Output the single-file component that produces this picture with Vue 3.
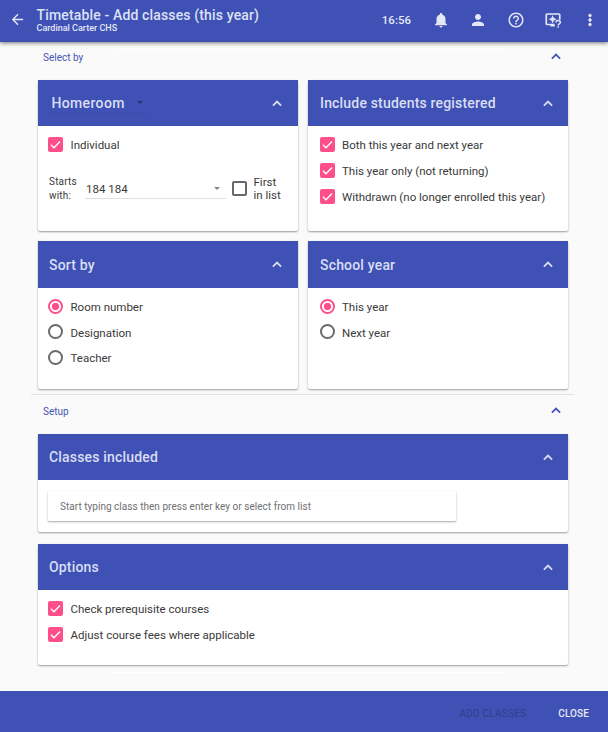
<script setup>
import { ref, h } from 'vue'

const Chevron = () =>
  h('svg', { class: 'chevron', viewBox: '0 0 10 7' }, [
    h('path', { d: 'M0.9 5.6 L5 1.6 L9.1 5.6', fill: 'none', stroke: 'currentColor', 'stroke-width': '1.8' })
  ])

const registered = ref([
  { label: 'Both this year and next year', on: true },
  { label: 'This year only (not returning)', on: true },
  { label: 'Withdrawn (no longer enrolled this year)', on: true }
])
const options = ref([
  { label: 'Check prerequisite courses', on: true },
  { label: 'Adjust course fees where applicable', on: true }
])
const individual = ref(true)
const sortOptions = ['Room number', 'Designation', 'Teacher']
const sortBy = ref('Room number')
const yearOptions = ['This year', 'Next year']
const year = ref('This year')
</script>

<template>
  <div class="page">
    <header class="topbar">
      <svg class="back" viewBox="0 0 24 24"><path d="M20 11H7.83l5.59-5.59L12 4l-8 8 8 8 1.41-1.41L7.83 13H20v-2z" /></svg>
      <div class="titles">
        <div class="title">Timetable - Add classes (this year)</div>
        <div class="subtitle">Cardinal Carter CHS</div>
      </div>
      <div class="tools">
        <span class="clock">16:56</span>
        <svg viewBox="0 0 24 24"><path d="M12 22c1.1 0 2-.9 2-2h-4c0 1.1.9 2 2 2zm6-6v-5c0-3.07-1.64-5.64-4.5-6.32V4c0-.83-.67-1.5-1.5-1.5s-1.5.67-1.5 1.5v.68C7.63 5.36 6 7.92 6 11v5l-2 2v1h16v-1l-2-2z" /></svg>
        <svg viewBox="0 0 24 24"><path d="M12 12c2.21 0 4-1.79 4-4s-1.79-4-4-4-4 1.79-4 4 1.79 4 4 4zm0 2c-2.67 0-8 1.34-8 4v2h16v-2c0-2.66-5.33-4-8-4z" /></svg>
        <svg viewBox="0 0 24 24"><path d="M11 18h2v-2h-2v2zm1-16C6.48 2 2 6.48 2 12s4.48 10 10 10 10-4.48 10-10S17.52 2 12 2zm0 18c-4.41 0-8-3.59-8-8s3.59-8 8-8 8 3.59 8 8-3.59 8-8 8zm0-14c-2.21 0-4 1.79-4 4h2c0-1.1.9-2 2-2s2 .9 2 2c0 2-3 1.75-3 5h2c0-2.25 3-2.5 3-5 0-2.21-1.79-4-4-4z" /></svg>
        <svg viewBox="0 0 24 24">
          <path d="M21 11.500V5.200A1.200 1.200 0 0 0 19.800 4H4.200A1.200 1.200 0 0 0 3 5.200V16.800A1.200 1.200 0 0 0 4.200 18H14M8.500 19.700H14.500" fill="none" stroke="currentColor" stroke-width="2.200" />
          <path d="M11.500 5.500l1.700 3.800 3.800 1.700-3.800 1.700-1.700 3.800-1.700-3.800L6 11l3.800-1.700z" />
          <path d="M16 15.200c0-3.200 5.800-3.200 5.800 0 0 2-2.900 2-2.900 4M18.900 20.400v2" fill="none" stroke="currentColor" stroke-width="2" />
        </svg>
        <svg viewBox="0 0 24 24"><path d="M12 8c1.100 0 2-.9 2-2s-.9-2-2-2-2 .9-2 2 .9 2 2 2zm0 2c-1.100 0-2 .9-2 2s.9 2 2 2 2-.9 2-2-.9-2-2-2zm0 6c-1.100 0-2 .9-2 2s.9 2 2 2 2-.9 2-2-.9-2-2-2z" stroke="currentColor" stroke-width=".6" /></svg>
      </div>
    </header>

    <main class="content">
      <div class="hairline top"></div>
      <div class="section-label first"><span>Select by</span><Chevron /></div>

      <div class="grid">
        <section class="card r1">
          <div class="head">
            <h2 class="picker">Homeroom<i class="caret dark"></i></h2><Chevron />
          </div>
          <div class="body">
            <label class="row" @click="individual = !individual">
              <span class="check" :class="{ on: individual }"><svg viewBox="0 0 15 15"><path d="M3 7.700l3 3 6-6.200" /></svg></span>
              Individual
            </label>
            <div class="starts">
              <span class="starts-label">Starts with:</span>
              <span class="select">184 184<i class="caret"></i></span>
              <span class="check"></span>
              <span class="first-in">First<br />in list</span>
            </div>
          </div>
        </section>

        <section class="card r1">
          <div class="head"><h2>Include students registered</h2><Chevron /></div>
          <div class="body">
            <label v-for="r in registered" :key="r.label" class="row" @click="r.on = !r.on">
              <span class="check" :class="{ on: r.on }"><svg viewBox="0 0 15 15"><path d="M3 7.700l3 3 6-6.200" /></svg></span>
              {{ r.label }}
            </label>
          </div>
        </section>

        <section class="card r2">
          <div class="head"><h2>Sort by</h2><Chevron /></div>
          <div class="body">
            <label v-for="s in sortOptions" :key="s" class="row" @click="sortBy = s">
              <span class="radio" :class="{ on: sortBy === s }"></span>{{ s }}
            </label>
          </div>
        </section>

        <section class="card r2">
          <div class="head"><h2>School year</h2><Chevron /></div>
          <div class="body">
            <label v-for="y in yearOptions" :key="y" class="row" @click="year = y">
              <span class="radio" :class="{ on: year === y }"></span>{{ y }}
            </label>
          </div>
        </section>
      </div>

      <div class="divider"></div>
      <div class="section-label second"><span>Setup</span><Chevron /></div>

      <section class="card classes">
        <div class="head"><h2>Classes included</h2><Chevron /></div>
        <div class="body"><div class="search">Start typing class then press enter key or select from list</div></div>
      </section>

      <section class="card options">
        <div class="head"><h2>Options</h2><Chevron /></div>
        <div class="body">
          <label v-for="o in options" :key="o.label" class="row" @click="o.on = !o.on">
            <span class="check" :class="{ on: o.on }"><svg viewBox="0 0 15 15"><path d="M3 7.700l3 3 6-6.200" /></svg></span>
            {{ o.label }}
          </label>
        </div>
      </section>
      <div class="hairline bottom"></div>
    </main>

    <footer class="footer">
      <button class="add" disabled>ADD CLASSES</button>
      <button class="close">CLOSE</button>
    </footer>
  </div>
</template>

<style>
body { margin: 0; background: #fafafa; }
</style>

<style scoped>
* { box-sizing: border-box; }
.page {
  height: 732px;
  display: flex;
  flex-direction: column;
  background: #fafafa;
  font-family: Roboto, "Liberation Sans", sans-serif;
  color: #3a3a3a;
  overflow: hidden;
}
.topbar {
  height: 42px;
  flex: none;
  display: flex;
  align-items: flex-start;
  background: #3f51b5;
  color: #e4e7f6;
  box-shadow: 0 1px 4px rgba(0, 0, 0, .55);
  z-index: 1;
}
.back { width: 17px; height: 17px; margin: 11px 10.500px 0 9px; fill: currentColor; }
.titles { padding-top: 7px; white-space: nowrap; }
.title { font-size: 14px; line-height: 16px; font-weight: 500; letter-spacing: .15px; color: #dde1f4; }
.subtitle { font-size: 9px; line-height: 11px; font-weight: 500; }
.tools { margin-left: auto; display: flex; align-items: center; height: 39px; padding-right: 9px; }
.tools svg { width: 18px; height: 18px; fill: currentColor; margin-left: 19.500px; }
.tools svg:last-child { margin-left: 19px; }
.clock { font-size: 11.500px; font-weight: 500; margin-right: 1px; }
.content { flex: 1; padding: 0 40px 0 38px; }
.hairline { width: 393px; height: 1px; margin-left: 75px; background: #fff; }
.hairline.top { margin-top: 7px; }
.hairline.bottom { margin-top: 7px; }
.section-label {
  display: flex;
  justify-content: space-between;
  padding: 0 7.500px 0 5px;
  height: 16px;
  line-height: 16px;
  font-size: 10px;
  color: #4655b3;
}
.section-label.second { margin-top: 9px; margin-bottom: 14px; }
.section-label.first { margin-bottom: 14px; }
.section-label .chevron { margin-top: 2.500px; }
.chevron { width: 10px; height: 7px; flex: none; }
.grid { display: grid; grid-template-columns: 260px 260px; gap: 10px; }
.card {
  background: #fff;
  border-radius: 2px;
  box-shadow: 0 1px 2px rgba(0, 0, 0, .38);
}
.r1 { height: 151px; }
.r2 { height: 148px; }
.head {
  height: 46px;
  display: flex;
  justify-content: space-between;
  align-items: center;
  padding: 0 15px 0 12px;
  background: #3f51b5;
  color: #d9def3;
}
.r2 .head { height: 47px; }
.grid .card:nth-child(odd) .head { padding-left: 11px; padding-right: 16px; }
.classes .head, .options .head { padding-left: 11px; }
h2 { margin: 0; font-size: 14px; font-weight: 500; letter-spacing: .18px; line-height: 20px; }
.picker { width: 100px; padding-left: 2.500px; letter-spacing: .35px; display: flex; align-items: center; border-bottom: 1px solid #3b4cab; }
.caret { border: 3px solid transparent; border-top-color: #888; border-bottom: 0; }
.caret.dark { border-top-color: #27326f; margin-left: 12.500px; }
.body { padding: 6px 10px 0; }
.grid .card:nth-child(even) .body { padding-left: 12px; }
.row { display: flex; align-items: center; height: 26px; font-size: 11.500px; gap: 7px; white-space: nowrap; }
.grid .card:nth-child(odd) .row, .options .row { gap: 7.500px; }
.r2 .row { height: 25.700px; }
.check { width: 15px; height: 15px; flex: none; border: 2px solid #686868; border-radius: 2px; }
.check.on { border: 0; background: #ff4f8b; margin-bottom: 1px; }
.check svg { display: none; width: 15px; height: 15px; fill: none; stroke: #fff; stroke-width: 1.300; }
.check.on svg { display: block; }
.radio { width: 15px; height: 15px; flex: none; border: 2px solid #6b6b6b; border-radius: 50%; margin-bottom: 1.500px; }
.radio.on { border-color: #ff4f8b; background: radial-gradient(circle, #ff4f8b 3.300px, #fff 4px); }
.starts { display: flex; align-items: center; margin-top: 17px; height: 28px; padding-left: 1px; }
.starts .check { margin-bottom: 2px; }
.starts-label { width: 36px; font-size: 10px; line-height: 14px; letter-spacing: .2px; }
.select { width: 141px; height: 20px; line-height: 18px; padding: 0 6px 0 1px; display: flex; align-items: center; justify-content: space-between; font-size: 11.500px; border-bottom: 1px solid #e0e0e0; margin-right: 5.500px; }
.first-in { font-size: 11.500px; line-height: 13px; margin-left: 7px; }
.divider { height: 1px; background: #e2e2e2; margin: 5px -6px 0 -7px; }
.classes { height: 98px; width: 530px; }
.options { height: 121px; width: 530px; margin-top: 12px; }
.classes .body { padding: 11px 10px 0; }
.search { width: 408px; height: 30px; line-height: 31px; padding-left: 12px; font-size: 10px; letter-spacing: .03px; color: #707070; box-shadow: 0 1px 2px rgba(0, 0, 0, .35); border-radius: 1px; }
.footer { height: 41px; flex: none; display: flex; justify-content: flex-end; align-items: center; padding: 4px 19px 0 0; gap: 32px; background: #3f51b5; }
button { background: none; border: 0; padding: 0; font: 400 10px/14px Roboto, sans-serif; color: #e8eaf6; }
.add { color: #303e8b; letter-spacing: .25px; }
.close { font-weight: 500; letter-spacing: .1px; }
</style>
